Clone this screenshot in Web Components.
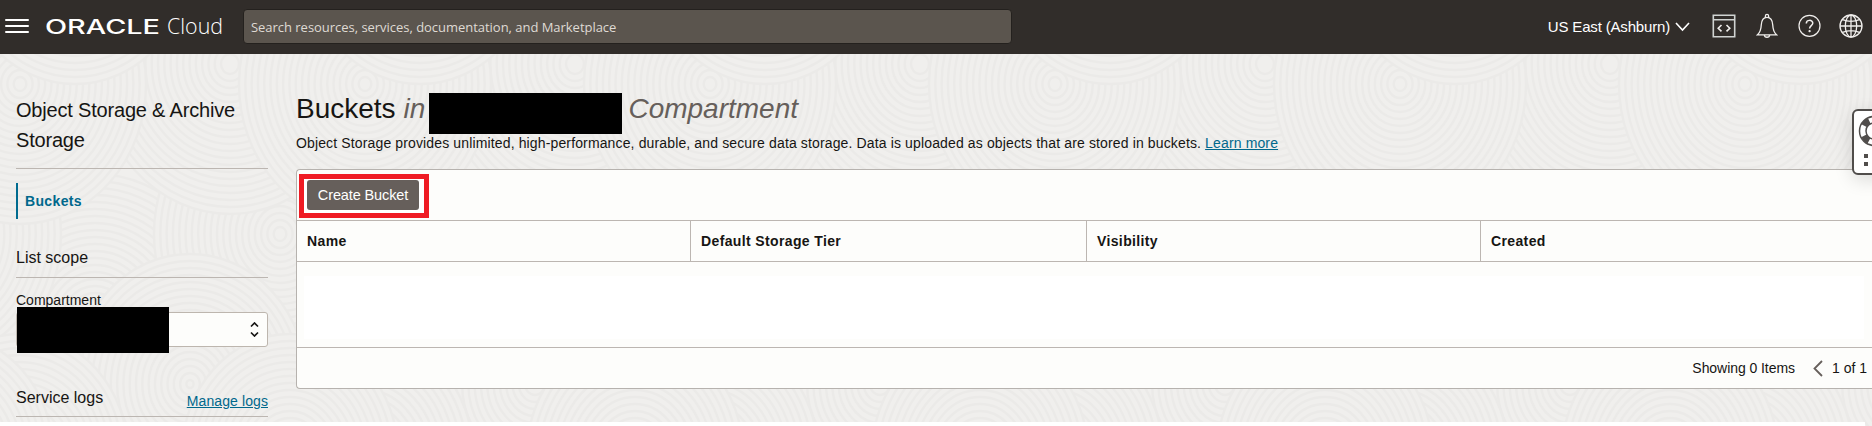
<!DOCTYPE html>
<html lang="en"><head><meta charset="utf-8"><title>Buckets</title>
<style>
html,body{margin:0;height:100%;overflow:hidden;background:#fff}
body{font-family:"Liberation Sans",Arial,sans-serif;font-size:14px;color:#161513}
</style></head><body>
<console-app></console-app>
<script>
const define=(name,html,init)=>customElements.define(name,class extends HTMLElement{
  constructor(){super();const t=document.createElement('template');t.innerHTML=html;
    this.attachShadow({mode:'open'}).append(t.content.cloneNode(true));if(init)init(this.shadowRoot);}
});

define('contour-texture',`<style>:host{display:block;position:absolute;inset:0;overflow:hidden;z-index:0}svg{display:block;filter:blur(.7px)}</style>
<svg width="1872" height="372"><rect width="1872" height="372" fill="#f0efed"/><g id="g" fill="#f0efed" stroke="#ebeae8" stroke-width="2.4"></g></svg>`,root=>{
  const discs=[[95,270,150],[280,180,140],[190,330,130],[20,400,120],[290,400,120],[230,10,150],[20,30,140],[75,-100,130]];
  let out='';
  for(const [x,y,r] of discs)for(let tile=-1;tile<6;tile++)for(let k=r;k>3;k-=7)
    out+='<ellipse cx="'+(x+tile*345)+'" cy="'+y+'" rx="'+k*.9+'" ry="'+k+'"/>';
  root.getElementById('g').innerHTML=out;
});

define('brand-logo',`<style>:host{display:block;width:180px;height:54px;color:#fff}text{fill:#fff}</style>
<svg width="180" height="54"><text x="-1" y="33.5" font-family="Inter" font-weight="500" font-size="19.6" textLength="115" lengthAdjust="spacingAndGlyphs">ORACLE</text>
<text x="121" y="33.5" font-family="Open Sans" font-weight="300" font-size="22" textLength="56" lengthAdjust="spacingAndGlyphs">Cloud</text></svg>`);

define('search-field',`<style>:host{display:flex;align-items:center;box-sizing:border-box;width:769px;height:35px;margin-top:-1px;background:#5b554e;border:1px solid #24211e;border-radius:4px;padding-left:7px;color:#dfdad4;font:13px "Open Sans","Noto Sans",sans-serif;letter-spacing:-.03px}</style><slot></slot>`);

define('header-icons',`<style>:host{display:flex;align-items:center}svg{display:block;fill:none;stroke:#f1efed;stroke-width:1.3}.a{margin-right:20px}.b{margin-right:19.5px}.c{margin-right:18.500px}</style>
<svg class="a" width="24" height="24" viewBox="0 0 24 24"><g stroke="#d0d3d1" stroke-width="1.6"><path d="M1.3 1.3h21.4v21.4H1.3zM1 5.7h22"/><path d="M9.5 11 6.2 14.2l3.3 3.2M14.5 11l3.3 3.2-3.3 3.2" stroke="#f1efed"/></g></svg>
<svg class="b" width="22" height="26" viewBox="0 0 22 26"><path d="M1.5 21.8c2.3-2 3.5-4.6 3.8-10C5.600 6.600 7.600 4.300 11 4.300s5.400 2.300 5.700 7.500c.3 5.400 1.500 8 3.800 10zM9.400 4.500V3a1.600 1.600 0 0 1 3.200 0v1.500M8.300 22c.3 3 5.100 3 5.400 0"/></svg>
<svg class="c" width="23" height="24" viewBox="0 0 23 24"><circle cx="11.5" cy="11.800" r="10.500" stroke-width="1.200"/><path d="M8.300 9.500c0-4.200 6.500-4 6.500-.4 0 2.500-3.200 2.700-3.200 5.500" stroke-width="1.500"/><circle cx="11.600" cy="17.200" r=".5"/></svg>
<svg width="24" height="24" viewBox="0 0 24 24"><circle cx="12" cy="12" r="11"/><ellipse cx="12" cy="12" rx="5.700" ry="11"/><path d="M1 12h22M3.500 5.600c5 2 12 2 17 0M3.500 18.400c5-2 12-2 17 0M12 1v22" /></svg>`);

define('app-header',`<style>:host{display:flex;align-items:center;height:54px;background:#312d2a;box-sizing:border-box;padding-left:5px;padding-right:9px;color:#fff}
.menu{display:grid;gap:4px;width:24px;margin-right:17px;margin-top:-2px}.menu i{height:2px;background:#fff;border-radius:1px}
search-field{margin-left:17px}.region{margin-left:auto;font-size:15px;display:flex;align-items:center;margin-right:22px;gap:5px;white-space:nowrap;margin-top:-2px}.region svg{margin-top:2px}.region span{letter-spacing:-.17px}header-icons{margin-top:-2px}</style>
<div class="menu"><i></i><i></i><i></i></div><brand-logo></brand-logo><search-field>Search resources, services, documentation, and Marketplace</search-field>
<div class="region"><span>US East (Ashburn)</span><svg width="15" height="10" viewBox="0 0 15 10" fill="none" stroke="#fff" stroke-width="1.6"><path d="m1 1 6.500 7L14 1"/></svg></div><header-icons></header-icons>`);

define('redacted-box',`<style>:host{display:block;background:#000}</style>`);

define('compartment-select',`<style>:host{display:block;position:relative}label{display:block;line-height:16px;height:20px}.box{display:flex;align-items:center;justify-content:flex-end;box-sizing:border-box;height:35px;background:#fdfdfb;border:1px solid #bdb6ae;border-radius:3px;padding-right:8px}redacted-box{position:absolute;left:1px;top:15px;width:152px;height:46px}</style>
<label>Compartment</label><div class="box"><svg width="9" height="15" viewBox="0 0 9 15" fill="none" stroke="#161513" stroke-width="1.700"><path d="m1 4.500 3.500-3.500L8 4.500M1 10.500 4.500 14 8 10.500"/></svg></div><redacted-box></redacted-box>`);

define('side-nav',`<style>:host{display:block;width:252px}h1,h2{font-weight:400;margin:0}h1{font-size:20px;line-height:30px;letter-spacing:-.19px;height:73px;padding-top:41px;border-bottom:1px solid #bcb6b1}
.active{display:flex;align-items:center;height:36px;margin-top:14px;border-left:2px solid #006b8f;padding-left:7px;color:#00688c;font-weight:700;letter-spacing:.35px}
h2{font-size:16px;line-height:20px}.scope{margin-top:28px;height:30px;line-height:22px;border-bottom:1px solid #bcb6b1}compartment-select{margin-top:14px}
.logs{display:flex;justify-content:space-between;margin-top:41px;height:28px;border-bottom:1px solid #bcb6b1}.logs a{color:#00688c;text-decoration:underline;line-height:26px;letter-spacing:.1px}</style>
<h1>Object Storage &amp; Archive Storage</h1><div class="active">Buckets</div><h2 class="scope">List scope</h2><compartment-select></compartment-select><div class="logs"><h2>Service logs</h2><a>Manage logs</a></div>`);

define('action-button',`<style>:host{display:flex;align-items:center;width:130px;height:44px;box-sizing:border-box;border:5px solid #ef1b24;padding-left:3px;background:#fff}button{all:unset;box-sizing:border-box;width:112px;height:30px;line-height:29px;background:#665f5b;border-radius:3px;color:#fff;text-align:center;font-size:14.500px;letter-spacing:-.12px;margin-top:-2px}</style><button><slot></slot></button>`);

define('bucket-table',`<style>:host{display:block;box-sizing:border-box;height:220px;border:1px solid #b6b2ae;border-right:0;border-radius:4px 0 0 4px;background:#fdfdfb;overflow:hidden}
.tools{height:50px;padding-left:2px;box-sizing:border-box;padding-top:4px}.head{display:grid;grid-template-columns:394px 396px 394px 1fr;height:40px;border-top:1px solid #bcb6b1;border-bottom:1px solid #bcb6b1}
.head b{display:flex;align-items:center;padding-left:10px;border-right:1px solid #bcb6b1;letter-spacing:.37px;box-sizing:border-box}.head b:last-child{border:0}
.rows{height:85px;box-sizing:border-box;padding:14px 8px 8px 7px}.rows div{height:63px;background:#fff}
.foot{display:flex;align-items:center;justify-content:flex-end;border-top:1px solid #bcb6b1;height:40px;padding-right:5px}.foot span:first-child{letter-spacing:-.06px}.foot svg{margin:1px 9px 0 18px}</style>
<div class="tools"><action-button>Create Bucket</action-button></div><div class="head"><b>Name</b><b>Default Storage Tier</b><b>Visibility</b><b>Created</b></div><div class="rows"><div></div></div>
<div class="foot"><span>Showing 0 Items</span><svg width="10" height="17" viewBox="0 0 10 17" fill="none" stroke="#665f5b" stroke-width="1.800"><path d="M9 1 1.500 8.500 9 16"/></svg><span>1 of 1</span></div>`);

define('bucket-page',`<style>:host{display:block;flex:1;min-width:0}.title{display:flex;height:80px;padding-top:0;font-size:28px;line-height:109px}.title em{color:#665f5b}.in{margin-left:8px}redacted-box{width:193px;height:41px;margin:39px 6px 0 4px}
p{margin:0;line-height:18px;height:35px;white-space:nowrap;letter-spacing:.137px}p a{color:#00688c;text-decoration:underline}</style>
<div class="title"><span>Buckets</span><em class="in">in</em><redacted-box></redacted-box><em>Compartment</em></div>
<p>Object Storage provides unlimited, high-performance, durable, and secure data storage. Data is uploaded as objects that are stored in buckets. <a>Learn more</a></p><bucket-table></bucket-table>`);

define('support-widget',`<style>:host{display:block;position:absolute;z-index:2;left:1852px;top:55px;width:50px;height:66px;box-sizing:border-box;border:2px solid #504d4b;border-radius:6px;background:#fff;box-shadow:0 5px 18px #0002}svg{display:block}</style>
<svg width="48" height="62" viewBox="0 0 48 62"><g fill="none" stroke="#504d4b"><circle cx="20" cy="20" r="14.500" stroke-width="1.500"/><circle cx="20" cy="20" r="8" stroke-width="1.500"/><circle cx="20" cy="20" r="11" stroke-width="6.500" stroke-dasharray="7 10.280" stroke-dashoffset="-5.140"/></g><path fill="#504d4b" d="M10 43h4v4h-4zM10 51h4v4h-4zM18 43h4v4h-4zM18 51h4v4h-4z"/></svg>`);

define('console-app',`<style>:host{display:block;width:1872px;height:426px;overflow:hidden;position:relative}main{position:relative;height:372px;overflow:hidden}.content{position:relative;z-index:1;display:flex;gap:28px;padding-left:16px;height:368px}.end{position:relative;z-index:1;height:4px;width:1865px;background:#fff}</style>
<app-header></app-header><main><contour-texture></contour-texture><div class="content"><side-nav></side-nav><bucket-page></bucket-page></div><div class="end"></div><support-widget></support-widget></main>`);
</script></body></html>
